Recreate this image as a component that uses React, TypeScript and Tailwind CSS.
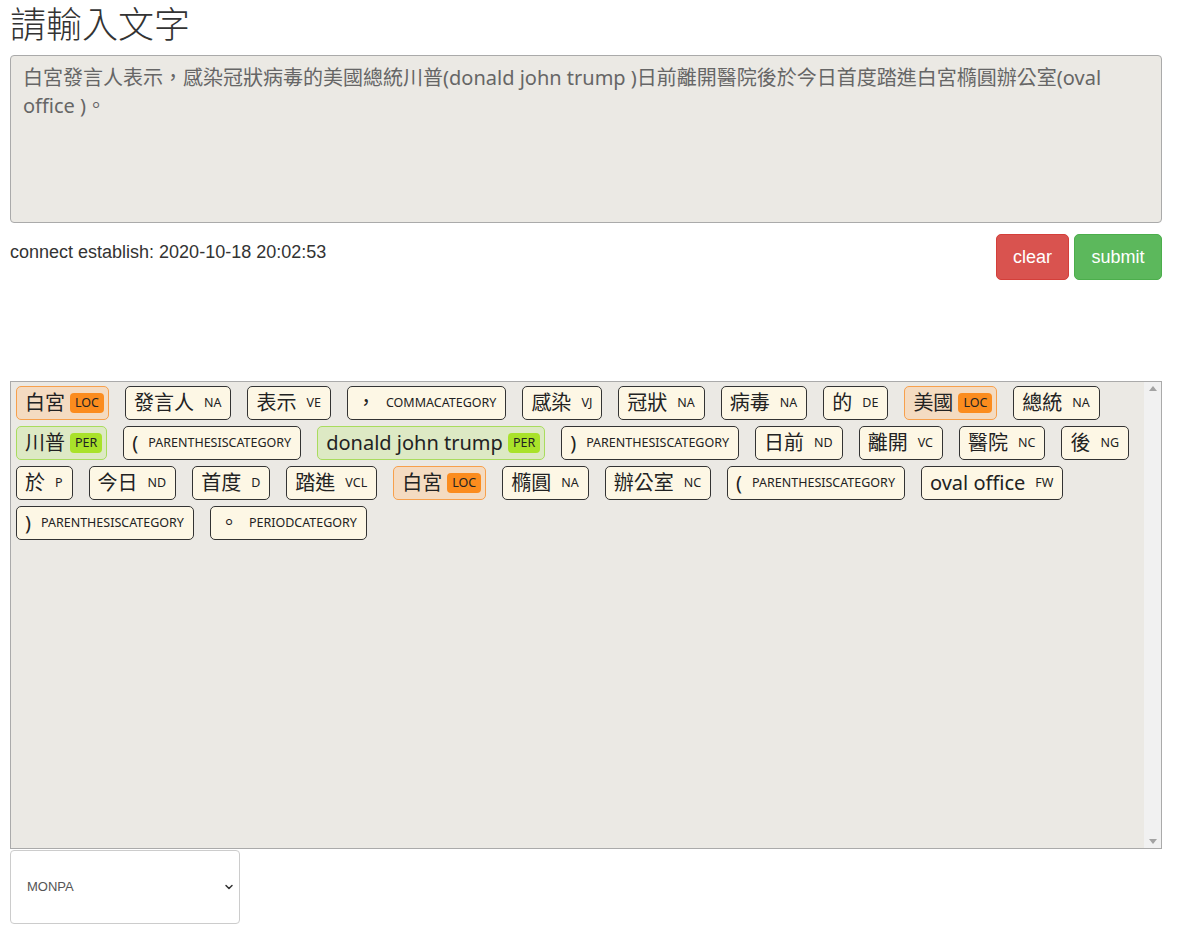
import React from "react";
import { ChevronDown } from "lucide-react";

type Token = { w: string; t: string };

const tokens: Token[] = [
  { w: "白宮", t: "LOC" },
  { w: "發言人", t: "NA" },
  { w: "表示", t: "VE" },
  { w: "，", t: "COMMACATEGORY" },
  { w: "感染", t: "VJ" },
  { w: "冠狀", t: "NA" },
  { w: "病毒", t: "NA" },
  { w: "的", t: "DE" },
  { w: "美國", t: "LOC" },
  { w: "總統", t: "NA" },
  { w: "川普", t: "PER" },
  { w: "(", t: "PARENTHESISCATEGORY" },
  { w: "donald john trump", t: "PER" },
  { w: ")", t: "PARENTHESISCATEGORY" },
  { w: "日前", t: "ND" },
  { w: "離開", t: "VC" },
  { w: "醫院", t: "NC" },
  { w: "後", t: "NG" },
  { w: "於", t: "P" },
  { w: "今日", t: "ND" },
  { w: "首度", t: "D" },
  { w: "踏進", t: "VCL" },
  { w: "白宮", t: "LOC" },
  { w: "橢圓", t: "NA" },
  { w: "辦公室", t: "NC" },
  { w: "(", t: "PARENTHESISCATEGORY" },
  { w: "oval office", t: "FW" },
  { w: ")", t: "PARENTHESISCATEGORY" },
  { w: "。", t: "PERIODCATEGORY" },
];

const font = { fontFamily: '"Noto Sans", "Noto Sans CJK TC", sans-serif' };
const arial = { fontFamily: '"Liberation Sans", Arial, sans-serif' };

function Chip({ w, t }: Token) {
  let box = "bg-[#fdf7e5] border-[#333]";
  let tag = "";
  if (t === "LOC") {
    box = "bg-[#f4dbc1] border-[#f7a04c]";
    tag = "bg-[#fb8c1e]";
  } else if (t === "PER") {
    box = "bg-[#dde9c4] border-[#a9dc5e]";
    tag = "bg-[#a9e22a]";
  }
  return (
    <div className={`flex items-center h-[34px] pl-[8px] pr-[4px] border rounded-[5px] ${box}`}>
      <span className="text-[20px] leading-[24px] text-[#222]">{w}</span>
      <span className={`ml-[5px] px-[5px] py-[1px] rounded-[4px] text-[12.5px] leading-[18px] text-[#222] ${tag}`}>
        {t}
      </span>
    </div>
  );
}

export default function App() {
  return (
    <div className="w-[1187px] h-[931px] bg-white px-[10px] pt-[3px] overflow-hidden" style={font}>
      <h1 className="text-[36px] leading-[44px] font-light text-[#333]">請輸入文字</h1>
      <textarea
        className="mt-[8px] block w-[1152px] h-[168px] bg-[#ebe9e4] border border-[#aaa] rounded-[4px] px-[12px] py-[8px] text-[20px] leading-[28px] text-[#666] resize-none outline-none"
        style={font}
        defaultValue="白宮發言人表示，感染冠狀病毒的美國總統川普(donald john trump )日前離開醫院後於今日首度踏進白宮橢圓辦公室(oval office )。"
      />
      <div className="flex justify-between mt-[11px] w-[1152px]">
        <div className="pt-[7px] text-[18px] leading-[22px] text-[#333]" style={arial}>
          connect establish: 2020-10-18 20:02:53
        </div>
        <div className="flex gap-[5px]" style={arial}>
          <button className="w-[73px] h-[46px] rounded-[5px] bg-[#d9534f] border border-[#d43f3a] text-white text-[18px]">
            clear
          </button>
          <button className="w-[88px] h-[46px] rounded-[5px] bg-[#5cb85c] border border-[#4cae4c] text-white text-[18px]">
            submit
          </button>
        </div>
      </div>
      <div className="mt-[101px] w-[1152px] h-[468px] border border-[#aaa] bg-[#ebe9e4] flex overflow-hidden">
        <div className="flex-1">
          <div className="flex flex-wrap gap-x-[16px] gap-y-[6px] pl-[5px] pt-[4px]">
            {tokens.map((tk, i) => (
              <Chip key={i} {...tk} />
            ))}
          </div>
        </div>
        <div className="w-[17px] bg-[#f1f1f1] flex flex-col justify-between items-center py-[4px]">
          <svg width="8" height="5" viewBox="0 0 8 5">
            <path d="M0 5 L4 0 L8 5 Z" fill="#a3a3a3" />
          </svg>
          <svg width="8" height="5" viewBox="0 0 8 5">
            <path d="M0 0 L4 5 L8 0 Z" fill="#a3a3a3" />
          </svg>
        </div>
      </div>
      <div className="relative mt-[1px] w-[230px] h-[74px]">
        <select
          className="appearance-none w-full h-full bg-white border border-[#ccc] rounded-[4px] pl-[16px] text-[13px] text-[#555]"
          style={arial}
          defaultValue="MONPA"
        >
          <option value="MONPA">MONPA</option>
        </select>
        <ChevronDown
          className="absolute right-[5px] top-[31px] pointer-events-none text-[#333]"
          size={12}
          strokeWidth={3}
        />
      </div>
    </div>
  );
}
